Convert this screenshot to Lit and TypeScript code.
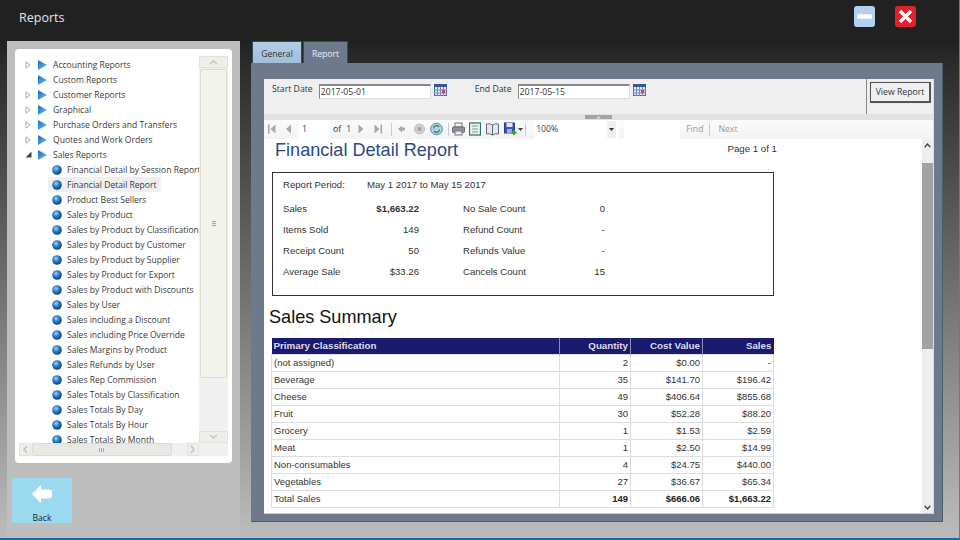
import { LitElement, html, css, svg } from "lit";
import { customElement } from "lit/decorators.js";

const tree: [string, number, boolean?][] = [
  ["Accounting Reports", 0], ["Custom Reports", 3], ["Customer Reports", 0], ["Graphical", 0],
  ["Purchase Orders and Transfers", 0], ["Quotes and Work Orders", 0], ["Sales Reports", 1],
  ["Financial Detail by Session Report", 2], ["Financial Detail Report", 2, true], ["Product Best Sellers", 2],
  ["Sales by Product", 2], ["Sales by Product by Classification", 2], ["Sales by Product by Customer", 2],
  ["Sales by Product by Supplier", 2], ["Sales by Product for Export", 2], ["Sales by Product with Discounts", 2],
  ["Sales by User", 2], ["Sales including a Discount", 2], ["Sales including Price Override", 2],
  ["Sales Margins by Product", 2], ["Sales Refunds by User", 2], ["Sales Rep Commission", 2],
  ["Sales Totals by Classification", 2], ["Sales Totals By Day", 2], ["Sales Totals By Hour", 2], ["Sales Totals By Month", 2],
];
const summary = [
  ["Sales", "$1,663.22", "No Sale Count", "0", true],
  ["Items Sold", "149", "Refund Count", "-"],
  ["Receipt Count", "50", "Refunds Value", "-"],
  ["Average Sale", "$33.26", "Cancels Count", "15"],
];
const rows = [
  ["(not assigned)", "2", "$0.00", "-"], ["Beverage", "35", "$141.70", "$196.42"], ["Cheese", "49", "$406.64", "$855.68"],
  ["Fruit", "30", "$52.28", "$88.20"], ["Grocery", "1", "$1.53", "$2.59"], ["Meat", "1", "$2.50", "$14.99"],
  ["Non-consumables", "4", "$24.75", "$440.00"], ["Vegetables", "27", "$36.67", "$65.34"],
];

const folder = html`<svg class="ico-f" width="11" height="12" viewBox="0 0 11 12"><defs><linearGradient id="fg" x1="0" x2="1" y1="0" y2="1"><stop offset="0" stop-color="#0f6fc4"/><stop offset="1" stop-color="#7cc0ee"/></linearGradient></defs><path d="M1 1 L10 6 L1 11 Z" fill="url(#fg)"/></svg>`;
const ball = html`<svg class="ico-b" width="10" height="10" viewBox="0 0 10 10"><defs><radialGradient id="bg" cx=".4" cy=".35" r=".65"><stop offset="0" stop-color="#a8d4f4"/><stop offset=".45" stop-color="#2f82cc"/><stop offset="1" stop-color="#0b3f80"/></radialGradient></defs><circle cx="5" cy="5" r="4.8" fill="url(#bg)"/></svg>`;
const calendar = html`<svg class="cal" width="13" height="12" viewBox="0 0 13 12"><rect x=".5" y=".5" width="12" height="11" fill="#dfe8f6" stroke="#4d6fae"/><rect x="0" y="0" width="13" height="3" fill="#35569c"/><path d="M0 6h13M0 9h13M3.5 3v9M6.5 3v9M9.5 3v9" stroke="#6f8cc4" stroke-width="1"/><rect x="8" y="6" width="3" height="3" fill="#d8434a"/></svg>`;
const g = "#a9a9a9";

@customElement("app-root")
export class AppRoot extends LitElement {
  static styles = css`
    :host { display: block; width: 960px; height: 540px; overflow: hidden; font-family: "Open Sans", "Noto Sans", sans-serif;
      background: linear-gradient(#212121 41px, #2a2a2a 60px, #bababa 530px); box-sizing: border-box; border-bottom: 2px solid #1c6ba6; border-right: 1px solid #3a86c8; }
    * { box-sizing: border-box; }
    .head { height: 41px; background: #212121; display: flex; align-items: flex-start; padding: 6px 43px 0 19px; }
    .title { color: #e4e4e4; font-size: 12.5px; line-height: 24px; flex: 1; }
    .winbtn { width: 21px; height: 21px; border-radius: 3px; display: flex; align-items: center; justify-content: center; }
    .min { background: #b4d0ee; margin-right: 20px; }
    .close { background: #e2202e; }
    .main { display: flex; height: 497px; padding-left: 7px; }
    .left { width: 233px; background: #bebebe; padding: 8px; margin-right: 11px; display: flex; flex-direction: column; }
    .card { width: 217px; height: 414px; background: #fff; border-radius: 4px; padding: 7px 4px 7px 4px; display: grid; grid-template-columns: 180px 29px; grid-template-rows: 387px 13px; }
    .tree { overflow: hidden; padding-top: 1px; }
    .node { height: 15px; display: flex; align-items: center; font-size: 8.55px; color: #3a3a3a; white-space: nowrap; }
    .node span { padding-right: 2px; }
    .exp { width: 8px; margin-left: 6px; margin-right: 4px; display: flex; }
    .ico-f { margin-right: 5px; flex: none; }
    .leaf { padding-left: 29px; }
    .ico-b { margin: 0 5px 0 4px; flex: none; }
    .leafin { display: flex; align-items: center; height: 15px; padding-right: 2px; }
    .sel .leafin { background: #efefef; }
    .vs { background: #f0f0f0; display: flex; flex-direction: column; }
    .sbtn { background: #efefe9; border: 1px solid #e2e2d8; display: flex; align-items: center; justify-content: center; flex: none; }
    .vs .sbtn { height: 12px; }
    .vthumb { margin: 1px 1px 0; height: 309px; background: #f3f3ee; border: 1px solid #dcdcc8; border-radius: 2px; display: flex; align-items: center; justify-content: center; }
    .vspace { flex: 1; }
    .hs { background: #f0f0f0; display: flex; align-items: stretch; }
    .hs .sbtn { width: 12px; }
    .hthumb { width: 140px; margin-left: 1px; background: #e8e8e4; border: 1px solid #dcdcc8; border-radius: 2px; display: flex; align-items: center; justify-content: center; }
    .hspace { flex: 1; }
    .corner { background: #f0f0f0; }
    .hgrip { width: 6px; height: 4px; background: repeating-linear-gradient(90deg, #aaa 0 1px, #e8e8e8 1px 2px); }
    .vgrip { width: 4px; height: 6px; background: repeating-linear-gradient(#aaa 0 1px, #e8e8e8 1px 2px); }
    .back { width: 60px; height: 45px; margin: 15px 0 0 -3px; background: #9bd9ee; display: flex; flex-direction: column; align-items: center; color: #223; font-size: 8.5px; padding-top: 7px; }
    .back span { margin-top: 10px; line-height: 10px; }
    .right { width: 692px; display: flex; flex-direction: column; }
    .tabs { display: flex; height: 22px; gap: 1px; }
    .tab { font-size: 8.6px; display: flex; align-items: center; justify-content: center; height: 22px; padding-top: 2px; border: 1px solid #3a4a5c; border-bottom: 0; }
    .t1 { width: 50px; background: linear-gradient(#b4cce6, #a2bedb); color: #333; margin-left: 1px; }
    .t2 { width: 45px; background: #6c7a8b; color: #eef; }
    .panel { height: 459px; background: #6c7a8b; border-right: 1px solid #4e5c6e; border-bottom: 1px solid #4e5c6e; padding: 16px 8px 8px 13px; }
    .inner { width: 670px; height: 435px; background: #fff; display: flex; flex-direction: column; border-right: 1px solid #ddd; border-bottom: 1px solid #ccc; }
    .filter { height: 35px; background: #efefef; display: flex; font-size: 8.7px; color: #333; flex: none; }
    .fl { flex: 1; display: flex; padding: 5px 0 0 8px; align-items: flex-start; }
    .flabel { line-height: 11px; }
    .fl input { font: 8.7px "Open Sans", sans-serif; color: #333; width: 112px; height: 15px; border: 1px solid #ddd; border-top: 2px solid #888; border-left: 1px solid #888; padding: 0 0 0 1px; background: #fff; margin: 0 0 0 6px; }
    .cal { margin-left: 3px; flex: none; }
    .e { margin-left: 28px; }
    .fr { width: 67px; border-left: 1px solid #8a8a8a; padding: 3px 0 0 3px; }
    .vr { width: 61px; height: 21px; border: 1px solid #555; border-right-width: 2px; border-bottom-width: 2px; background: #f0f0f0; font: 8.7px "Open Sans", sans-serif; color: #333; padding: 0; outline: 1px solid #e8e8e8; }
    .split { height: 6px; background: #e2e2e2; display: flex; justify-content: center; align-items: center; flex: none; }
    .gripbar { width: 27px; height: 4px; background: #a4a4a4; display: flex; justify-content: center; }
    .tool { height: 19px; padding-bottom: 1px; background: linear-gradient(#fbfbfb, #f3f3f3); display: flex; align-items: center; font-size: 8.7px; color: #555; flex: none; }
    .tool svg { flex: none; }
    .tool .sep { width: 1px; height: 13px; background: #ccc; flex: none; }
    .pi { background: #fff; width: 30px; height: 19px; line-height: 18px; padding-left: 3px; color: #444; flex: none; align-self: flex-start; }
    .of { color: #333; }
    .pg { color: #446; }
    .zoom { background: #fff; width: 85px; height: 19px; display: flex; align-items: center; padding: 0 0 1px 2px; color: #444; flex: none; align-self: flex-start; }
    .zoom span { flex: 1; }
    .zd { width: 9px; height: 17px; background: #efefef; display: flex; align-items: center; justify-content: center; margin-right: 3px; }
    .find { width: 56px; height: 19px; background: #fff; flex: none; align-self: flex-start; }
    .mut { color: #9a9a9a; flex: none; }
    .m1 { margin-left: 1px; } .m2 { margin-left: 2px; } .m3 { margin-left: 3px; } .m4 { margin-left: 4px; } .m5 { margin-left: 5px; }
    .m6 { margin-left: 6px; } .m7 { margin-left: 7px; } .m8 { margin-left: 8px; } .m9 { margin-left: 9px; } .m10 { margin-left: 10px; }
    .body { flex: 1; display: flex; min-height: 0; }
    .doc { flex: 1; overflow: hidden; font-family: "Liberation Sans", Arial, sans-serif; color: #333; padding: 0 0 0 5px; }
    .dh { width: 508px; display: flex; justify-content: space-between; padding-left: 6px; height: 33px; }
    .dh h1 { margin: 0; font-weight: 400; font-size: 18.1px; line-height: 23px; color: #2c4a80; }
    .dh div { font-size: 9.7px; line-height: 20px; color: #333; }
    .box { width: 502px; height: 124px; margin-left: 3px; border: 1px solid #333; padding: 6px 0 0 10px; font-size: 9.6px; }
    .per { display: flex; height: 12px; line-height: 12px; margin-bottom: 12px; }
    .per b { font-weight: 400; width: 84px; }
    .sr { display: grid; grid-template-columns: 92px 44px 44px 108px 34px; height: 21px; line-height: 12px; }
    .v { text-align: right; }
    .h2 { margin: 10px 0 0 0; font-size: 18.1px; font-weight: 400; color: #111; line-height: 22px; height: 32px; }
    table { border-collapse: collapse; table-layout: fixed; width: 502px; margin-left: 2px; font-size: 9.5px; color: #333; }
    .c1 { width: 288px; } .c2 { width: 71px; } .c3 { width: 72px; } .c4 { width: 71px; }
    th { background: #1a1a6e; color: #dcdcec; font-weight: 700; height: 16px; padding: 0 2px; border-left: 1px solid #8c8cb4; text-align: right; font-size: 9.8px; }
    th:first-child { text-align: left; border-left: 0; }
    td { height: 17px; padding: 0 2px; border: 1px solid #ddd; text-align: right; }
    td:first-child { text-align: left; }
    td.b { font-weight: 700; color: #222; }
    .ds { width: 11px; background: #eee; display: flex; flex-direction: column; flex: none; }
    .a { height: 12px; display: flex; align-items: center; justify-content: center; flex: none; }
    .th { height: 186px; background: #a3a3a3; margin-top: 12px; flex: none; }
    .g { flex: 1; }
  `;

  private tb(w: number, ml: string, content: unknown) {
    return html`<svg class=${ml} width=${w} height="14" viewBox="0 0 ${w} 14">${content}</svg>`;
  }

  render() {
    return html`
      <div class="head">
        <div class="title">Reports</div>
        <div class="winbtn min"><svg width="15" height="5"><rect width="15" height="4.5" rx="1" y=".3" fill="#fff"/></svg></div>
        <div class="winbtn close"><svg width="15" height="15" viewBox="0 0 15 15"><path d="M2 2 L13 13 M13 2 L2 13" stroke="#fff" stroke-width="3.4"/></svg></div>
      </div>
      <div class="main">
        <div class="left">
          <div class="card">
            <div class="tree">
              ${tree.map(([t, k, sel]) => k === 2
                ? html`<div class="node leaf ${sel ? "sel" : ""}"><div class="leafin">${ball}<span>${t}</span></div></div>`
                : html`<div class="node"><div class="exp">${k === 0
                    ? html`<svg width="6" height="8" viewBox="0 0 6 8"><path d="M1 .8 L5 4 L1 7.2 Z" fill="#fff" stroke="#a8a8a8"/></svg>`
                    : k === 1 ? html`<svg width="7" height="7" viewBox="0 0 7 7"><path d="M6.5 .5 V6.5 H.5 Z" fill="#444"/></svg>` : ""}</div>${folder}<span>${t}</span></div>`)}
            </div>
            <div class="vs">
              <div class="sbtn"><svg width="9" height="6" viewBox="0 0 9 6"><path d="M1 5 L4.5 2 L8 5" fill="none" stroke="#c4c4c4" stroke-width="1.6"/></svg></div>
              <div class="vthumb"><div class="vgrip"></div></div>
              <div class="vspace"></div>
              <div class="sbtn"><svg width="9" height="6" viewBox="0 0 9 6"><path d="M1 1 L4.5 4 L8 1" fill="none" stroke="#c4c4c4" stroke-width="1.6"/></svg></div>
            </div>
            <div class="hs">
              <div class="sbtn"><svg width="6" height="9" viewBox="0 0 6 9"><path d="M5 1 L2 4.5 L5 8" fill="none" stroke="#c4c4c4" stroke-width="1.6"/></svg></div>
              <div class="hthumb"><div class="hgrip"></div></div>
              <div class="hspace"></div>
              <div class="sbtn"><svg width="6" height="9" viewBox="0 0 6 9"><path d="M1 1 L4 4.5 L1 8" fill="none" stroke="#c4c4c4" stroke-width="1.6"/></svg></div>
            </div>
            <div class="corner"></div>
          </div>
          <div class="back">
            <svg width="20" height="18" viewBox="0 0 20 18"><path d="M0 9 L9 0 L9 4.5 L17 4.5 Q20 4.5 20 7 L20 11 Q20 13.5 17 13.5 L9 13.5 L9 18 Z" fill="#fff"/></svg>
            <span>Back</span>
          </div>
        </div>
        <div class="right">
          <div class="tabs"><div class="tab t1">General</div><div class="tab t2">Report</div></div>
          <div class="panel">
            <div class="inner">
              <div class="filter">
                <div class="fl">
                  <span class="flabel">Start Date</span><input value="2017-05-01" />${calendar}
                  <span class="flabel e">End Date</span><input value="2017-05-15" />${calendar}
                </div>
                <div class="fr"><button class="vr">View Report</button></div>
              </div>
              <div class="split"><div class="gripbar"><svg width="7" height="4" viewBox="0 0 7 4"><path d="M3.5 1 L6 3.5 H1 Z" fill="#ddd"/></svg></div></div>
              <div class="tool">
                ${this.tb(9, "m3", svg`<path d="M1 2.5h1.6v9H1z" fill="${g}"/><path d="M8.5 2.5 L3.5 7 L8.5 11.5 Z" fill="${g}"/>`)}
                ${this.tb(6, "m9", svg`<path d="M6 2.5 L1 7 L6 11.5 Z" fill="${g}"/>`)}
                <div class="pi m8">1</div>
                <span class="of m4">of</span><span class="pg m5">1</span>
                ${this.tb(6, "m7", svg`<path d="M0.5 2.5 L5.5 7 L0.5 11.5 Z" fill="${g}"/>`)}
                ${this.tb(9, "m10", svg`<path d="M0.5 2.5 L5.5 7 L0.5 11.5 Z" fill="${g}"/><path d="M6.5 2.5h1.6v9H6.5z" fill="${g}"/>`)}
                <div class="sep m8"></div>
                ${this.tb(7, "m6", svg`<path d="M0 7 L4 3.5 V5.5 H7 V8.5 H4 V10.5 Z" fill="#a8a8a8"/>`)}
                ${this.tb(11, "m9", svg`<circle cx="5.5" cy="7" r="5" fill="#d0d0d0" stroke="#bbb"/><path d="M3.8 5.3 L7.2 8.7 M7.2 5.3 L3.8 8.7" stroke="#999" stroke-width="1.3"/>`)}
                ${this.tb(13, "m5", svg`<circle cx="6.5" cy="7" r="5.8" fill="#b5d2f0" stroke="#4a86c4"/><path d="M3.5 6.5 A3 3 0 0 1 9 5 M9.5 7.5 A3 3 0 0 1 4 9" fill="none" stroke="#3c9a3c" stroke-width="1.5"/>`)}
                <div class="sep m5"></div>
                ${this.tb(13, "m3", svg`<rect x="3" y="1" width="7" height="4" fill="#f4f4f4" stroke="#777"/><rect x=".5" y="5" width="12" height="5.5" rx="1" fill="#8a939c" stroke="#667"/><rect x="3" y="9" width="7" height="4" fill="#eee" stroke="#777"/>`)}
                ${this.tb(12, "m4", svg`<rect x=".5" y="1" width="11" height="12" fill="#e8f4e8" stroke="#2f6f6a" stroke-width="1.2"/><path d="M3 4h6M3 7h6M3 10h6" stroke="#7fa0a0"/>`)}
                ${this.tb(13, "m5", svg`<path d="M6.5 3 Q3.5 1 .5 2 V12 Q3.5 11 6.5 13 Q9.5 11 12.5 12 V2 Q9.5 1 6.5 3 Z" fill="#dfeaf6" stroke="#667"/><path d="M6.5 3V13" stroke="#667"/>`)}
                ${this.tb(13, "m5", svg`<rect x=".5" y="1" width="10" height="10" fill="#3b52b8" stroke="#2a3a90"/><rect x="2.5" y="1" width="6" height="4" fill="#dfe6f8"/><rect x="3" y="7" width="5" height="4" fill="#9fb0e0"/><path d="M10 8v5M7.5 10.5h5" stroke="#2ea52e" stroke-width="1.8"/>`)}
                ${this.tb(5, "m1", svg`<path d="M0 6 H5 L2.5 9 Z" fill="#444"/>`)}
                <div class="sep m2"></div>
                <div class="zoom m8"><span>100%</span><div class="zd"><svg width="5" height="3"><path d="M0 0H5L2.5 3Z" fill="#333"/></svg></div></div>
                <div class="find m5"></div>
                <span class="mut m6">Find</span>
                <div class="sep m6"></div>
                <span class="mut m8">Next</span>
              </div>
              <div class="body">
                <div class="doc">
                  <div class="dh"><h1>Financial Detail Report</h1><div>Page 1 of 1</div></div>
                  <div class="box">
                    <div class="per"><b>Report Period:</b><span>May 1 2017 to May 15 2017</span></div>
                    ${summary.map(([a, b, c, d, bold]) => html`<div class="sr">
                      <span>${a}</span>
                      <span class="v">${bold ? html`<strong>${b}</strong>` : b}</span>
                      <span></span>
                      <span>${c}</span>
                      <span class="v">${d}</span>
                    </div>`)}
                  </div>
                  <div class="h2">Sales Summary</div>
                  <table>
                    <colgroup><col class="c1"/><col class="c2"/><col class="c3"/><col class="c4"/></colgroup>
                    <thead><tr><th>Primary Classification</th><th>Quantity</th><th>Cost Value</th><th>Sales</th></tr></thead>
                    <tbody>
                      ${rows.map((r) => html`<tr>${r.map((c) => html`<td>${c}</td>`)}</tr>`)}
                      <tr><td>Total Sales</td><td class="b">149</td><td class="b">$666.06</td><td class="b">$1,663.22</td></tr>
                    </tbody>
                  </table>
                </div>
                <div class="ds">
                  <div class="a"><svg width="7" height="5" viewBox="0 0 7 5"><path d="M.7 4.2 L3.5 1 L6.3 4.2" fill="none" stroke="#444" stroke-width="1.3"/></svg></div>
                  <div class="th"></div><div class="g"></div>
                  <div class="a"><svg width="7" height="5" viewBox="0 0 7 5"><path d="M.7 .8 L3.5 4 L6.3 .8" fill="none" stroke="#444" stroke-width="1.3"/></svg></div>
                </div>
              </div>
            </div>
          </div>
        </div>
      </div>
    `;
  }
}
